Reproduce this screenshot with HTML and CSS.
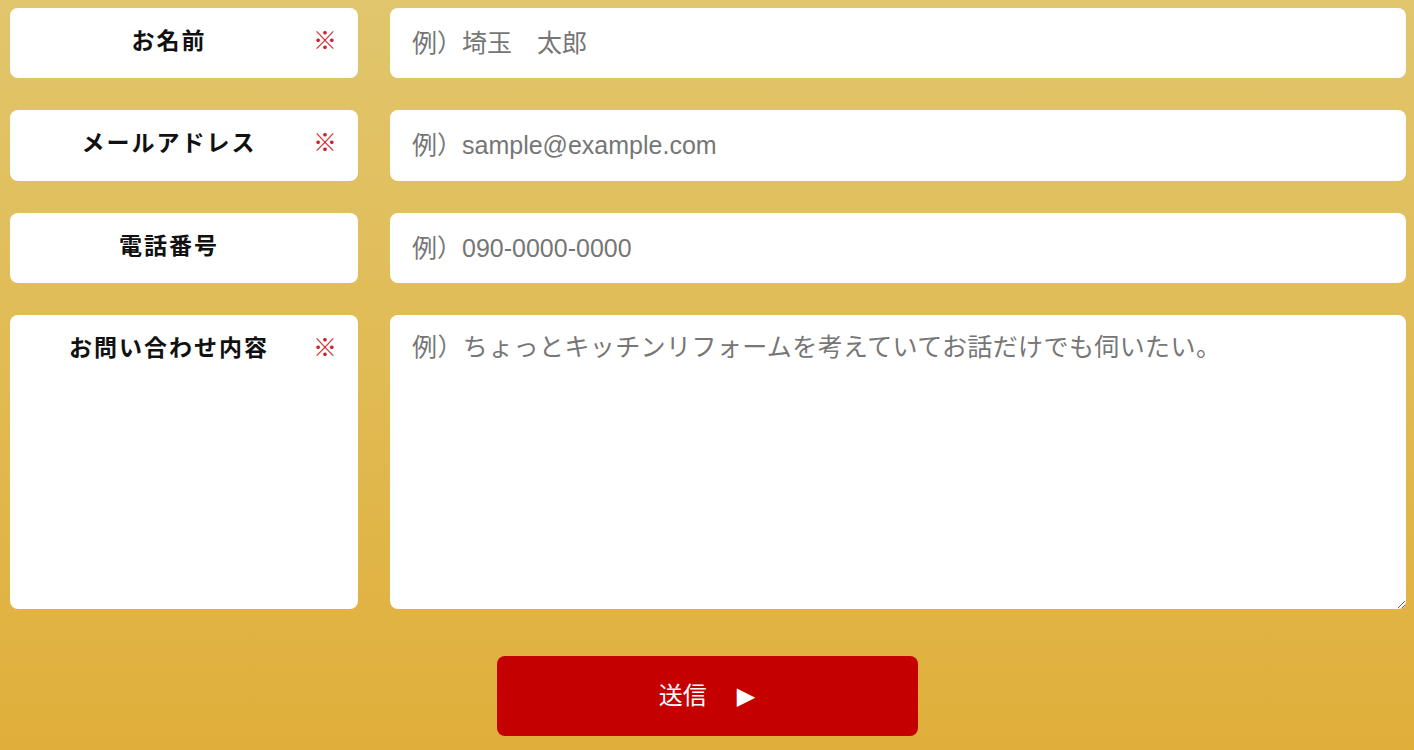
FILE: index.html
```html
<!DOCTYPE html>
<html lang="ja">
<head>
  <meta charset="UTF-8">
  <meta name="viewport" content="width=device-width, initial-scale=1.0">
  <title>お問い合わせ</title>
  <link rel="stylesheet" href="styles.css">
</head>
<body>
  <form class="contact-form">
    <div class="form-grid">
      <label class="field-label" for="name">お名前<span class="required">※</span></label>
      <input class="field-input" type="text" id="name" name="name" placeholder="例）埼玉　太郎">

      <label class="field-label" for="email">メールアドレス<span class="required">※</span></label>
      <input class="field-input" type="email" id="email" name="email" placeholder="例）sample@example.com">

      <label class="field-label" for="tel">電話番号</label>
      <input class="field-input" type="tel" id="tel" name="tel" placeholder="例）090-0000-0000">

      <label class="field-label" for="message">お問い合わせ内容<span class="required">※</span></label>
      <textarea class="field-input field-textarea" id="message" name="message" placeholder="例）ちょっとキッチンリフォームを考えていてお話だけでも伺いたい。"></textarea>
    </div>
    <div class="submit-row">
      <button type="submit" class="submit-button">送信<span class="arrow">▶</span></button>
    </div>
  </form>
</body>
</html>
```

FILE: styles.css
```css
html, body {
  height: 100%;
}
body {
  margin: 0;
  font-family: "Liberation Sans", "Noto Sans CJK JP", sans-serif;
  background: linear-gradient(to bottom, #e1c66d, #e0af3a);
}
.contact-form {
  padding: 8px 8px 0 10px;
}
.form-grid {
  display: grid;
  grid-template-columns: 348px 1fr;
  grid-template-rows: 70px 71px 70px 294px;
  column-gap: 32px;
  row-gap: 32px;
}
.field-label {
  position: relative;
  display: block;
  box-sizing: border-box;
  background-color: #ffffff;
  border-radius: 8px;
  padding: 15px 30px 0 0;
  text-align: center;
  font-family: "Noto Sans CJK JP", sans-serif;
  font-weight: bold;
  font-size: 23px;
  line-height: 32px;
  letter-spacing: 2px;
  color: #111;
}
.required {
  position: absolute;
  right: 21px;
  top: 15px;
  color: #d0202a;
  font-weight: normal;
  font-size: 24px;
  letter-spacing: 0;
}
.field-input {
  display: block;
  width: 100%;
  box-sizing: border-box;
  border: none;
  border-radius: 8px;
  background-color: #ffffff;
  padding: 0 22px;
  font-family: "Liberation Sans", "Noto Sans CJK JP", sans-serif;
  font-size: 25px;
  color: #333;
  outline: none;
}
.field-input::placeholder {
  color: #767676;
}
.field-textarea {
  height: 100%;
  padding-top: 16px;
  line-height: 32px;
  resize: vertical;
}
.field-textarea::placeholder {
  letter-spacing: 0.4px;
}
.submit-row {
  display: flex;
  justify-content: center;
  padding: 47px 2px 14px 0;
}
.submit-button {
  width: 421px;
  height: 80px;
  border: none;
  border-radius: 8px;
  padding: 0 0 6px;
  background-color: #c40000;
  color: #ffffff;
  font-family: "Noto Sans CJK JP", sans-serif;
  font-size: 24px;
  cursor: pointer;
}
.arrow {
  margin-left: 30px;
  font-size: 24px;
  font-family: "DejaVu Sans", sans-serif;
}
```
